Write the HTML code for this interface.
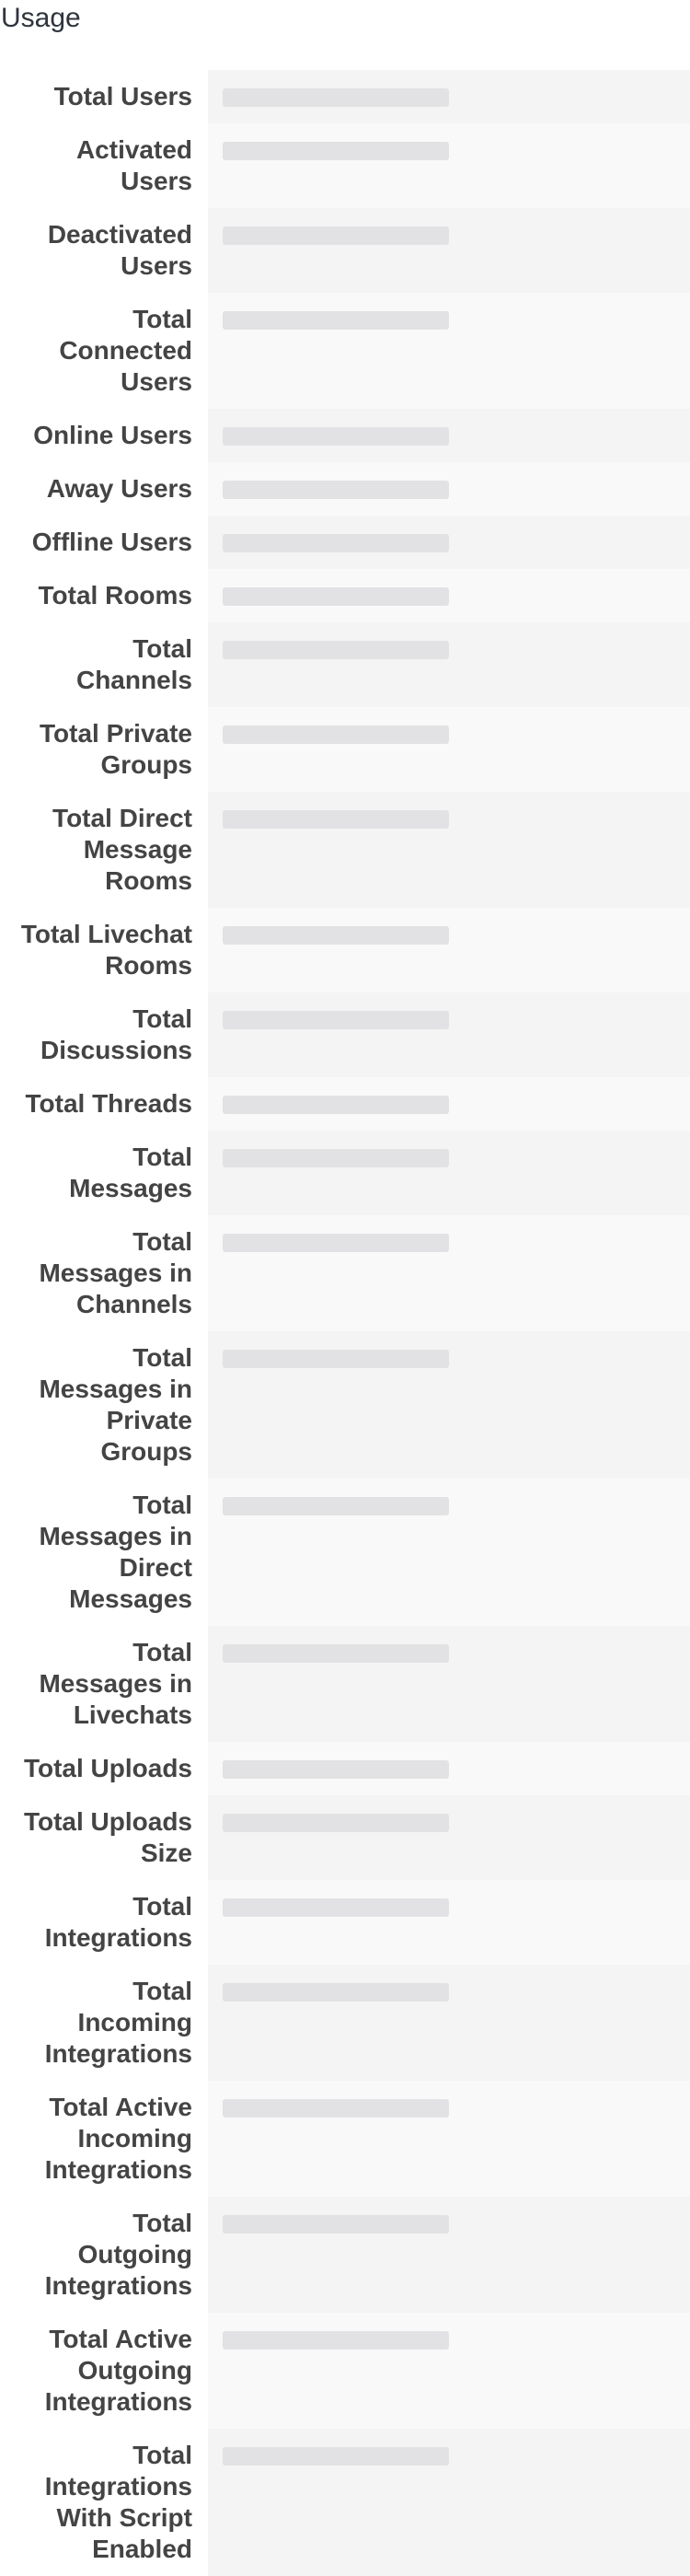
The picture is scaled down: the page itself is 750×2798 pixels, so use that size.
<!DOCTYPE html>
<html><head><meta charset="utf-8"><style>
html,body{margin:0;padding:0;background:#fff;width:750px;height:2798px;overflow:hidden}
body{font-family:"Liberation Sans",Arial,sans-serif}
h1{margin:0;position:absolute;left:1px;top:0;font-size:30px;font-weight:normal;color:#2f343d;line-height:40px}
table{position:absolute;left:0;top:76px;width:750px;border-collapse:collapse}
td{padding:0;vertical-align:top}
td.l{width:209px;padding:12px 17px 12px 0;text-align:right;font-weight:bold;font-size:28px;line-height:34px;color:#444;white-space:nowrap;background:#fff}
td.v{background:#f4f4f4;position:relative}
tr:nth-child(even) td.v{background:#f9f9f9}
.b{position:absolute;left:16px;top:20px;width:246px;height:20px;border-radius:3px;background:#e2e2e4}
</style></head><body>
<h1>Usage</h1>
<table>
<tr><td class="l">Total Users</td><td class="v"><div class="b"></div></td></tr>
<tr><td class="l">Activated<br>Users</td><td class="v"><div class="b"></div></td></tr>
<tr><td class="l">Deactivated<br>Users</td><td class="v"><div class="b"></div></td></tr>
<tr><td class="l">Total<br>Connected<br>Users</td><td class="v"><div class="b"></div></td></tr>
<tr><td class="l">Online Users</td><td class="v"><div class="b"></div></td></tr>
<tr><td class="l">Away Users</td><td class="v"><div class="b"></div></td></tr>
<tr><td class="l">Offline Users</td><td class="v"><div class="b"></div></td></tr>
<tr><td class="l">Total Rooms</td><td class="v"><div class="b"></div></td></tr>
<tr><td class="l">Total<br>Channels</td><td class="v"><div class="b"></div></td></tr>
<tr><td class="l">Total Private<br>Groups</td><td class="v"><div class="b"></div></td></tr>
<tr><td class="l">Total Direct<br>Message<br>Rooms</td><td class="v"><div class="b"></div></td></tr>
<tr><td class="l">Total Livechat<br>Rooms</td><td class="v"><div class="b"></div></td></tr>
<tr><td class="l">Total<br>Discussions</td><td class="v"><div class="b"></div></td></tr>
<tr><td class="l">Total Threads</td><td class="v"><div class="b"></div></td></tr>
<tr><td class="l">Total<br>Messages</td><td class="v"><div class="b"></div></td></tr>
<tr><td class="l">Total<br>Messages in<br>Channels</td><td class="v"><div class="b"></div></td></tr>
<tr><td class="l">Total<br>Messages in<br>Private<br>Groups</td><td class="v"><div class="b"></div></td></tr>
<tr><td class="l">Total<br>Messages in<br>Direct<br>Messages</td><td class="v"><div class="b"></div></td></tr>
<tr><td class="l">Total<br>Messages in<br>Livechats</td><td class="v"><div class="b"></div></td></tr>
<tr><td class="l">Total Uploads</td><td class="v"><div class="b"></div></td></tr>
<tr><td class="l">Total Uploads<br>Size</td><td class="v"><div class="b"></div></td></tr>
<tr><td class="l">Total<br>Integrations</td><td class="v"><div class="b"></div></td></tr>
<tr><td class="l">Total<br>Incoming<br>Integrations</td><td class="v"><div class="b"></div></td></tr>
<tr><td class="l">Total Active<br>Incoming<br>Integrations</td><td class="v"><div class="b"></div></td></tr>
<tr><td class="l">Total<br>Outgoing<br>Integrations</td><td class="v"><div class="b"></div></td></tr>
<tr><td class="l">Total Active<br>Outgoing<br>Integrations</td><td class="v"><div class="b"></div></td></tr>
<tr><td class="l">Total<br>Integrations<br>With Script<br>Enabled</td><td class="v"><div class="b"></div></td></tr>
</table>
</body></html>
